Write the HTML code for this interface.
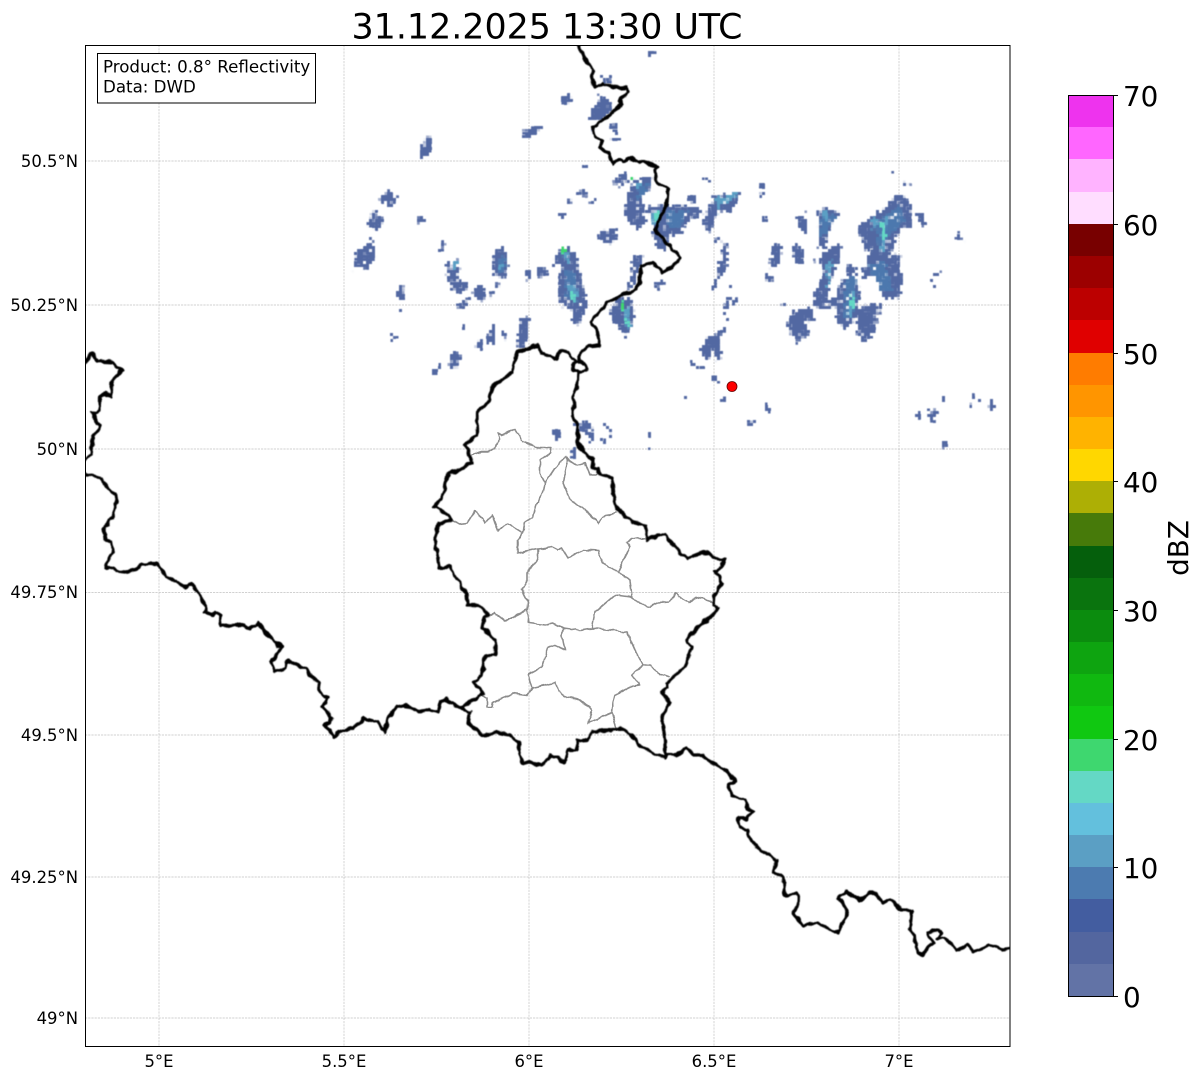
<!DOCTYPE html>
<html><head><meta charset="utf-8"><title>Radar</title>
<style>html,body{margin:0;padding:0;background:#fff;width:1202px;height:1081px;overflow:hidden}svg{display:block}
text{font-family:"DejaVu Sans","Liberation Sans",sans-serif;fill:#000}</style></head><body>
<svg width="1202" height="1081" viewBox="0 0 1202 1081" xmlns="http://www.w3.org/2000/svg">
<defs>
<filter id="r" filterUnits="userSpaceOnUse" x="340" y="40" width="670" height="420" color-interpolation-filters="sRGB">
<feTurbulence type="fractalNoise" baseFrequency="0.25" numOctaves="1" seed="4"/>
<feColorMatrix values="1 0 0 0 0 0 1 0 0 0 0 0 1 0 0 0 0 0 0 1" result="n"/>
<feDisplacementMap in="SourceGraphic" in2="n" scale="9" xChannelSelector="R" yChannelSelector="G" result="d"/>
<feTurbulence type="fractalNoise" baseFrequency="0.3" numOctaves="1" seed="11"/>
<feColorMatrix values="0 0 0 0 0 0 0 0 0 0 0 0 0 0 0 10 0 0 0 -2.9" result="m"/>
<feComposite in="d" in2="m" operator="in" result="h"/>
<feFlood x="340" y="40" width="1" height="1" flood-color="#000"/>
<feComposite width="3" height="3"/>
<feTile result="a"/>
<feComposite in="h" in2="a" operator="in"/>
<feMorphology operator="dilate" radius="1 1"/>
<feGaussianBlur stdDeviation="0.45"/>
</filter>
<filter id="w" filterUnits="userSpaceOnUse" x="0" y="0" width="1202" height="1081" color-interpolation-filters="sRGB">
<feTurbulence type="fractalNoise" baseFrequency="0.15" numOctaves="1" seed="7"/>
<feColorMatrix values="1 0 0 0 0 0 1 0 0 0 0 0 1 0 0 0 0 0 0 1"/>
<feDisplacementMap in="SourceGraphic" scale="6" xChannelSelector="R" yChannelSelector="G"/>
<feGaussianBlur stdDeviation="0.55"/>
</filter>
<filter id="g" filterUnits="userSpaceOnUse" x="0" y="0" width="1202" height="1081" color-interpolation-filters="sRGB">
<feTurbulence type="fractalNoise" baseFrequency="0.15" numOctaves="1" seed="7"/>
<feColorMatrix values="1 0 0 0 0 0 1 0 0 0 0 0 1 0 0 0 0 0 0 1"/>
<feDisplacementMap in="SourceGraphic" scale="4" xChannelSelector="R" yChannelSelector="G"/>
<feGaussianBlur stdDeviation="0.35"/>
</filter>
<clipPath id="c"><rect x="86" y="46" width="924" height="1000"/></clipPath>
</defs>
<rect width="1202" height="1081" fill="#fff"/>
<g stroke="#c2c2c2" stroke-width="0.7" stroke-dasharray="2.2 1">
<path d="M159 45V1046M344 45V1046M529 45V1046M714 45V1046M899 45V1046M85 161H1010M85 305H1010M85 449H1010M85 592.5H1010M85 735H1010M85 877H1010M85 1018H1010" fill="none"/></g>

<g filter="url(#r)" fill="#5268a2">
<polygon points="379,200 388,191 398,198 392,207"/>
<polygon points="375,209 377,209 377,215 384,220 378,232 367,225 372,215"/>
<polygon points="372,237 373,247 376,253 368,270 360,267 355,268 353,273 357,250 367,247"/>
<circle cx="421" cy="220" r="3"/>
<polygon points="444,237 446,237 442,251 439,251"/>
<polygon points="447,257 450,265 457,260 459,268 461,282 467,283 467,290 458,293 450,287 447,272"/>
<polygon points="402,283 405,300 398,300 398,290"/><rect x="400" y="306" width="2" height="6"/>
<polygon points="497,248 505,248 508,263 510,267 503,278 495,275 492,263"/>
<polygon points="480,283 485,293 483,305 478,300 472,293"/>
<polygon points="497,283 500,285 495,293 489,298"/>
<polygon points="465,297 470,298 463,310 456,308"/>
<polygon points="527,270 530,270 529,282 526,282"/>
<polygon points="540,263 548,273 540,278 536,275"/>
<polygon points="551,268 560,248 570,248 579,263 580,280 585,292 585,313 577,326 572,323 572,310 563,307 558,293 560,273 563,262"/>
<polygon points="633,257 643,255 638,273 633,287 627,290 632,270"/>
<polygon points="617,297 632,298 633,320 630,330 625,339 622,333 615,323 609,313"/>
<polygon points="652,280 667,283 657,288"/>
<polygon points="617,177 627,172 627,180 618,188 611,183"/>
<polygon points="633,180 648,177 655,182 642,197 645,222 635,232 630,222 623,210 630,193"/>
<polygon points="645,210 660,205 672,205 697,207 703,213 688,222 680,233 668,237 665,250 660,250 652,237 655,225"/>
<polygon points="583,188 589,193 585,198 577,193"/><circle cx="569" cy="202" r="3"/>
<polygon points="561,212 566,213 560,220 557,218"/>
<polygon points="603,230 617,228 617,240 607,245 598,238"/>
<polygon points="591,200 596,198 594,203 589,204"/>
<polygon points="520,317 529,317 529,327 525,347 517,347 518,333 522,327"/>
<polygon points="490,328 495,325 496,343 487,343 487,335"/>
<polygon points="503,332 506,332 507,343 503,343"/>
<polygon points="477,341 482,340 480,350 476,350"/>
<polygon points="462,325 466,323 464,330"/>
<polygon points="455,350 460,357 455,368 449,368 450,357"/>
<polygon points="433,367 437,367 437,377 433,377"/><rect x="439" y="362" width="3" height="6"/><rect x="392" y="335" width="3" height="7"/>
<polygon points="602,78 613,77 610,83 603,83"/>
<polygon points="597,95 608,98 612,108 600,120 588,120 592,108 600,103"/>
<polygon points="590,130 600,122 593,127 592,132"/>
<rect x="610" y="125" width="6" height="3"/><rect x="612" y="131" width="6" height="3"/><rect x="611" y="137" width="9" height="3"/>
<polygon points="560,100 569,94 573,100 565,106"/>
<rect x="648" y="52" width="7" height="3"/><rect x="583" y="165" width="4" height="4"/>
<polygon points="688,197 695,196 695,203 690,204"/><rect x="703" y="178" width="6" height="3"/>
<polygon points="713,197 738,193 738,202 730,212 718,210 710,232 702,225"/>
<polygon points="521,133 538,124 542,128 527,138"/>
<polygon points="419,153 427,136 431,140 431,150 425,158"/>
<rect x="760" y="184" width="4" height="4"/><rect x="760" y="193" width="3" height="6"/>
<polygon points="762,218 768,215 765,221"/>
<polygon points="797,218 805,213 807,233 802,233"/>
<polygon points="818,213 823,208 839,213 828,233 825,248 818,248 820,227"/>
<polygon points="773,243 783,245 780,262 773,268 769,263 773,253"/>
<polygon points="795,242 802,250 803,267 795,260 792,252"/>
<polygon points="768,270 773,282 768,283 766,275"/>
<rect x="780" y="300" width="3" height="8"/>
<polygon points="837,243 843,250 837,263 830,283 827,300 837,297 837,307 817,310 812,297 820,282 825,270 815,260 822,255 828,250"/>
<polygon points="847,263 857,270 855,283 860,287 857,317 845,330 837,320 837,290 842,277 848,283"/>
<polygon points="858,310 870,303 880,305 882,313 877,317 872,337 862,343 858,332"/>
<polygon points="787,323 793,312 812,308 815,320 803,323 812,333 798,343 790,333"/>
<polygon points="863,270 872,248 865,250 858,228 872,217 880,212 900,193 910,202 912,225 897,233 890,257 900,252 898,273 903,277 898,298 883,298 877,277 863,280"/>
<polygon points="913,210 922,215 928,228 920,222"/>
<polygon points="890,170 900,175 892,173"/><polygon points="903,180 913,187 905,184"/>
<polygon points="958,230 965,243 957,238"/>
<circle cx="938" cy="275" r="3"/><rect x="931" y="278" width="3" height="4"/><rect x="932" y="285" width="3" height="4"/>
<polygon points="723,240 727,243 728,260 723,278 717,277 718,263 722,257"/><rect x="715" y="237" width="4" height="4"/>
<rect x="713" y="280" width="3" height="10"/><rect x="730" y="285" width="3" height="3"/>
<rect x="727" y="296" width="3" height="4"/><rect x="735" y="297" width="4" height="4"/><rect x="724" y="303" width="6" height="5"/><rect x="732" y="301" width="4" height="3"/><rect x="722" y="312" width="3" height="4"/><rect x="727" y="316" width="3" height="4"/>
<polygon points="702,348 708,337 717,333 725,327 718,342 722,357 717,360 713,347 707,360 700,350"/>
<rect x="691" y="362" width="3" height="4"/><rect x="695" y="366" width="3" height="3"/><rect x="701" y="366" width="3" height="3"/>
<rect x="714" y="378" width="3" height="4"/><rect x="684" y="396" width="3" height="4"/><rect x="722" y="399" width="3" height="4"/>
<rect x="748" y="421" width="6" height="5"/><rect x="766" y="405" width="3" height="6"/>
<polygon points="914,417 917,411 920,412 920,418"/>
<polygon points="928,409 938,410 932,422 928,420"/>
<rect x="942" y="396" width="3" height="4"/>
<polygon points="975,387 973,398 972,408 970,408 972,396"/><rect x="979" y="393" width="2" height="8"/>
<polygon points="990,398 994,405 993,413 989,410"/>
<rect x="942" y="441" width="5" height="7"/>
<polygon points="573,423 590,421 593,430 585,432 578,430"/>
<rect x="554" y="430" width="6" height="9"/><rect x="588" y="433" width="6" height="9"/>
<rect x="571" y="448" width="4" height="10"/><circle cx="650" cy="434" r="2.5"/><rect x="648" y="449" width="3" height="3"/>
<rect x="534" y="472" width="3" height="4"/><rect x="540" y="480" width="3" height="4"/>
<rect x="602" y="422" width="3" height="3"/><rect x="607" y="426" width="3" height="4"/><rect x="609" y="434" width="3" height="4"/><rect x="600" y="435" width="3" height="4"/><rect x="604" y="441" width="3" height="3"/>
<g fill="#4c78ae">
<polygon points="565,270 575,272 578,296 566,298"/><polygon points="640,185 650,182 640,200 635,200"/><polygon points="665,212 690,210 680,226 668,228"/><polygon points="875,225 900,205 905,220 890,235 878,245"/><polygon points="822,215 835,214 826,235 820,235"/><polygon points="845,280 856,275 855,310 845,320"/><polygon points="868,265 885,262 893,290 880,290"/><polygon points="500,256 505,256 505,272 498,272"/>
</g>
<g fill="#5b9fc4">
<rect x="453" y="261" width="6" height="8"/><circle cx="500" cy="267" r="3.5"/>
<polygon points="566,285 573,285 578,300 574,303"/><polygon points="563,255 568,254 570,262 565,262"/>
<polygon points="624,310 628,308 630,325 626,328"/>
<polygon points="636,183 644,182 637,190"/><polygon points="653,213 662,209 658,224 652,222"/>
<polygon points="714,198 737,194 734,200 717,204"/><polygon points="716,205 722,205 719,212"/>
<polygon points="828,262 833,258 830,285 826,290"/><polygon points="852,290 856,290 850,317 847,315"/>
<polygon points="883,222 888,218 884,250 879,252"/><polygon points="822,212 830,212 826,224"/><polygon points="872,215 878,222 873,232"/>
</g>
<g fill="#64d8c5"><polygon points="569,290 572,290 576,298 573,300"/><rect x="655" y="213" width="4" height="7"/><rect x="882" y="224" width="4" height="14"/><rect x="850" y="296" width="3" height="12"/><rect x="625" y="318" width="3" height="6"/></g>
<g fill="#3ed76f"><rect x="562" y="248" width="5" height="5"/><rect x="621" y="303" width="3" height="6"/><rect x="632" y="178" width="3" height="3"/></g>
</g>

<g clip-path="url(#c)">
<g filter="url(#g)" fill="none" stroke="#8c8c8c" stroke-width="1.6" stroke-linejoin="round" stroke-linecap="round">
<polyline points="472,455 482,452 487,452 495,448 500,438 498,433 502,435 515,429 523,442 540,448 551,448 550,453 540,460 540,473 545,483 543,493 537,503 533,517 525,522 523,533"/>
<polyline points="545,483 555,468 565,457 568,460 563,482 570,500 585,510 598,523 605,515 617,513"/>
<polyline points="567,458 577,465 585,463 590,475 597,475"/>
<polyline points="452,520 460,524 467,523 475,511 485,523 492,515 498,531 507,523 523,533 518,540 518,553 538,549 552,547 558,550 562,548 568,558 583,550 598,551 603,563 618,572 630,580 632,597"/>
<polyline points="618,572 630,547 627,543 632,538 647,539"/>
<polyline points="538,550 538,558 527,573 527,582 522,590 528,602 527,610 529,623 545,625 553,623 563,628 580,630 592,628 595,612 615,595 630,597 648,607 658,603 670,602 675,593 688,603 697,597 715,603"/>
<polyline points="563,628 562,635 565,650 555,645 548,648 542,667 528,675 532,688 527,695 513,693 493,703 492,707 487,707 487,698 482,695"/>
<polyline points="527,610 505,621 495,613 489,615"/>
<polyline points="532,688 555,683 558,690 567,697 580,700 592,710 588,723 612,713 613,703 615,695 633,686 640,685 632,675 643,665 650,665 657,673 668,677"/>
<polyline points="592,628 627,632 635,650 643,665"/>
<polyline points="612,713 617,730"/>
</g>

<g filter="url(#w)" fill="none" stroke="#000" stroke-width="3.3" stroke-linejoin="round" stroke-linecap="round">
<polyline points="84,363 93,353 97,361 113,362 117,368 122,370 112,381 111,397 105,393 100,397 100,410 93,413 95,420 101,426 93,437 91,455 84,460"/>
<polyline points="84,474 102,478 107,487 115,495 117,503 112,518 104,528 106,540 111,542 113,553 105,568 110,567 117,571 125,572 135,570 142,564 157,564 166,576 185,587 193,584 206,606 205,612 212,615 216,612 220,615 221,626 237,625 250,628 258,623 266,633 282,648 275,655 272,662 275,672 285,668 287,661 306,669 318,683 322,696 328,698 322,707 332,717 330,723 324,725 330,730 333,737 338,732 353,728 364,719 378,722 385,732 388,718 397,707 403,705 418,712 430,709 438,712 440,702 445,699 460,708 470,702 483,693 474,682 482,675 485,657 495,655 495,640 482,628 485,617 489,615 478,605 467,605 466,593 450,567 439,567 435,540 439,523 451,520 448,515 434,507 442,498 448,473 460,470 472,462 465,445 477,435 477,412 488,403 493,387 512,372 517,352 538,345 542,354 557,359 560,350 568,352 576,362"/>
<path d="M576 362 C572 366 572 372 577 372 C582 373 587 371 586 366 C585 362 579 361 576 362Z"/>
<polyline points="578,362 582,350 587,347 600,345 597,330 590,322 607,303 627,293 637,290 642,265 652,263 663,272 678,263 680,257 668,245 655,230 667,203 668,188 657,183 655,170 658,168 643,161 638,163 630,158 622,162 620,159 613,164 608,153 600,147 602,140 595,137 593,127 610,115 622,103 620,100 628,93 627,87 615,88 603,83 595,88 592,77 593,72 588,63 582,53 578,44"/>
<polyline points="578,372 577,387 573,398 574,407 572,415 578,430 578,443 585,453 593,460 592,468 598,468 600,475 612,478 613,493 618,510 633,522 645,525 648,540 657,535 665,535 680,553 688,558 703,552 720,560 725,558 722,567 717,570 715,570 722,583 715,593 714,605 718,608 713,615 700,625 687,640 692,647 685,667 672,678 667,683 668,688 662,693 670,702 662,717 665,740 665,758"/>
<polyline points="460,708 470,712 468,723 482,735 497,733 510,735 518,742 520,755 523,762 543,765 550,755 565,762 568,750 577,750 577,741 587,740 593,731 610,731 620,728 630,733 638,745 652,753 665,758 667,755 677,755 687,748 693,755 702,755 712,763 728,772 735,781 728,785 732,795 745,800 747,808 753,811 747,820 738,817 740,827 748,830 748,837 757,847 773,858 777,860 773,872 783,877 785,895 797,894 799,902 793,912 803,925 818,923 838,933 843,920 848,915 843,903 838,898 847,892 860,900 870,893 875,893 883,903 890,899 902,910 912,910 910,927 916,943 917,952 923,955 928,947 933,943 928,932 938,930 942,933 937,938 945,938 958,950 968,944 973,952 990,945 1003,950 1014,948"/>
</g>
</g>

<circle cx="732" cy="386.5" r="5" fill="#f00" stroke="#600" stroke-width="0.8"/>
<rect x="85.5" y="45.5" width="924.5" height="1001" fill="none" stroke="#000" stroke-width="1"/>

<rect x="97.5" y="53.5" width="218" height="49.5" fill="#fff" stroke="#000" stroke-width="1"/>
<text x="103" y="72.5" font-size="16.67">Product: 0.8° Reflectivity</text>
<text x="103" y="92.5" font-size="16.67">Data: DWD</text>

<text x="547" y="38.5" font-size="34.85" text-anchor="middle">31.12.2025 13:30 UTC</text>

<g font-size="16.45" text-anchor="end">
<text x="78" y="167">50.5°N</text><text x="78" y="311">50.25°N</text><text x="78" y="455">50°N</text><text x="78" y="598">49.75°N</text><text x="78" y="741">49.5°N</text><text x="78" y="883">49.25°N</text><text x="78" y="1024">49°N</text>
</g>
<g font-size="16.45" text-anchor="middle">
<text x="159" y="1067">5°E</text><text x="344" y="1067">5.5°E</text><text x="529" y="1067">6°E</text><text x="714" y="1067">6.5°E</text><text x="899" y="1067">7°E</text>
</g>

<g shape-rendering="crispEdges">
<rect x="1068" y="95" width="45" height="32.5" fill="#ee33ee"/><rect x="1068" y="127" width="45" height="32.5" fill="#ff66ff"/><rect x="1068" y="159" width="45" height="33" fill="#ffb3ff"/><rect x="1068" y="192" width="45" height="32" fill="#ffddff"/>
<rect x="1068" y="224" width="45" height="32" fill="#780000"/><rect x="1068" y="256" width="45" height="32" fill="#9c0000"/><rect x="1068" y="288" width="45" height="32" fill="#bc0000"/><rect x="1068" y="320" width="45" height="33" fill="#e00000"/>
<rect x="1068" y="353" width="45" height="32" fill="#ff7c00"/><rect x="1068" y="385" width="45" height="32" fill="#ff9500"/><rect x="1068" y="417" width="45" height="32" fill="#ffb300"/><rect x="1068" y="449" width="45" height="32" fill="#ffd700"/>
<rect x="1068" y="481" width="45" height="32" fill="#adaf05"/><rect x="1068" y="513" width="45" height="33" fill="#477a0a"/><rect x="1068" y="546" width="45" height="32" fill="#055f0c"/><rect x="1068" y="578" width="45" height="32" fill="#0a740e"/>
<rect x="1068" y="610" width="45" height="32" fill="#0b8c0e"/><rect x="1068" y="642" width="45" height="32" fill="#0ea410"/><rect x="1068" y="674" width="45" height="32" fill="#10b810"/><rect x="1068" y="706" width="45" height="33" fill="#10c811"/>
<rect x="1068" y="739" width="45" height="32" fill="#3ed76f"/><rect x="1068" y="771" width="45" height="32" fill="#64d8c5"/><rect x="1068" y="803" width="45" height="32" fill="#63c0dd"/><rect x="1068" y="835" width="45" height="32" fill="#5b9fc4"/>
<rect x="1068" y="867" width="45" height="32" fill="#4c7bb0"/><rect x="1068" y="899" width="45" height="33" fill="#435da0"/><rect x="1068" y="932" width="45" height="32" fill="#53669f"/><rect x="1068" y="964" width="45" height="32.5" fill="#6273a6"/>
</g>
<rect x="1068.5" y="95.5" width="45" height="901" fill="none" stroke="#000" stroke-width="1"/>
<path d="M1113 95.5h5M1113 224.5h5M1113 353.5h5M1113 481.5h5M1113 610.5h5M1113 739.5h5M1113 867.5h5M1113 996.5h5" stroke="#000" stroke-width="1"/>
<g font-size="27.8">
<text x="1123" y="106">70</text><text x="1123" y="235">60</text><text x="1123" y="364">50</text><text x="1123" y="492">40</text><text x="1123" y="621">30</text><text x="1123" y="750">20</text><text x="1123" y="878">10</text><text x="1123" y="1007">0</text>
</g>
<text transform="translate(1188 548) rotate(-90)" font-size="27.8" text-anchor="middle">dBZ</text>
</svg>
</body></html>
